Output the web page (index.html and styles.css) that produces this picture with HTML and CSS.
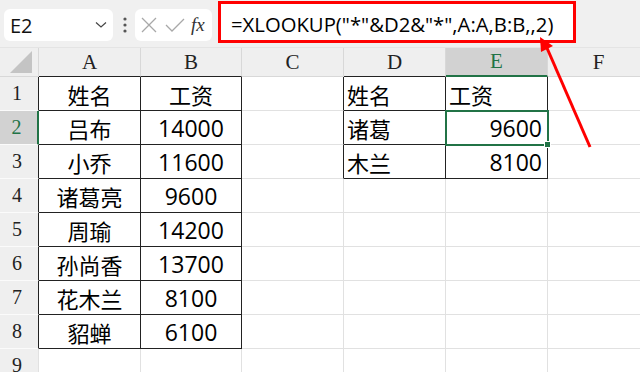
FILE: index.html
```html
<!DOCTYPE html>
<html>
<head>
    <meta charset="UTF-8">
    <title>XLOOKUP</title>
    <link rel="stylesheet" href="styles.css">
</head>
<body>
    <div class="barra">
        <div class="cuadroNombre">
            <span>E2</span>
            <svg class="flecha" width="12" height="8" viewBox="0 0 12 8"><path d="M1 1.5 L6 6 L11 1.5" fill="none" stroke="#444" stroke-width="1.2"/></svg>
        </div>
        <svg class="puntos" width="6" height="16" viewBox="0 0 6 16"><circle cx="3" cy="2" r="1.6" fill="#555"/><circle cx="3" cy="8" r="1.6" fill="#555"/><circle cx="3" cy="14" r="1.6" fill="#555"/></svg>
        <div class="cuadroFx">
            <svg width="18" height="18" viewBox="0 0 18 18"><path d="M2 2 L16 16 M16 2 L2 16" stroke="#a8a8a8" stroke-width="1.3"/></svg>
            <svg width="20" height="16" viewBox="0 0 20 16"><path d="M1 8 L7 14 L19 2" fill="none" stroke="#a8a8a8" stroke-width="1.3"/></svg>
            <span class="fx">fx</span>
        </div>
        <div class="formula">=XLOOKUP("*"&amp;D2&amp;"*",A:A,B:B,,2)</div>
    </div>

    <div class="hoja">
        <!-- cabecera de columnas -->
        <div class="cab esquina"><svg width="24" height="22" viewBox="0 0 24 22"><polygon points="0,22 22,22 22,0" fill="#c4c4c4"/></svg></div>
        <div class="cab">A</div>
        <div class="cab">B</div>
        <div class="cab">C</div>
        <div class="cab">D</div>
        <div class="cab sel">E</div>
        <div class="cab">F</div>

        <div class="fila r">1</div>
        <div class="celda c r d">姓名</div>
        <div class="celda c r d">工资</div>
        <div class="celda r"></div>
        <div class="celda l r d">姓名</div>
        <div class="celda l r d">工资</div>
        <div class="celda"></div>

        <div class="fila selFila">2</div>
        <div class="celda c r d">吕布</div>
        <div class="celda c r d num">14000</div>
        <div class="celda r"></div>
        <div class="celda l r d">诸葛</div>
        <div class="celda der r d num activa">9600</div>
        <div class="celda"></div>

        <div class="fila r">3</div>
        <div class="celda c r d">小乔</div>
        <div class="celda c r d num">11600</div>
        <div class="celda r"></div>
        <div class="celda l r d">木兰</div>
        <div class="celda der r d num">8100</div>
        <div class="celda"></div>

        <div class="fila r">4</div>
        <div class="celda c r d">诸葛亮</div>
        <div class="celda c r d num">9600</div>
        <div class="celda"></div>
        <div class="celda"></div>
        <div class="celda"></div>
        <div class="celda"></div>

        <div class="fila r">5</div>
        <div class="celda c r d">周瑜</div>
        <div class="celda c r d num">14200</div>
        <div class="celda"></div>
        <div class="celda"></div>
        <div class="celda"></div>
        <div class="celda"></div>

        <div class="fila r">6</div>
        <div class="celda c r d">孙尚香</div>
        <div class="celda c r d num">13700</div>
        <div class="celda"></div>
        <div class="celda"></div>
        <div class="celda"></div>
        <div class="celda"></div>

        <div class="fila r">7</div>
        <div class="celda c r d">花木兰</div>
        <div class="celda c r d num">8100</div>
        <div class="celda"></div>
        <div class="celda"></div>
        <div class="celda"></div>
        <div class="celda"></div>

        <div class="fila r">8</div>
        <div class="celda c r d">貂蝉</div>
        <div class="celda c r d num">6100</div>
        <div class="celda"></div>
        <div class="celda"></div>
        <div class="celda"></div>
        <div class="celda"></div>

        <div class="fila">9</div>
        <div class="celda"></div>
        <div class="celda"></div>
        <div class="celda"></div>
        <div class="celda"></div>
        <div class="celda"></div>
        <div class="celda"></div>
    </div>

    <!-- flecha roja de la anotacion -->
    <svg class="anotacion" width="640" height="372" viewBox="0 0 640 372">
        <line x1="590" y1="147" x2="547" y2="48" stroke="#ff0000" stroke-width="3"/>
        <polygon points="540,37 541,52 553,46" fill="#ff0000"/>
    </svg>
</body>
</html>
```

FILE: styles.css
```css
body{
    margin: 0;
    width: 640px;
    height: 372px;
    overflow: hidden;
    position: relative;
    background-color: #ffffff;
    font-family: "Noto Sans CJK SC", sans-serif;
}

.barra{
    height: 48px;
    background-color: #f0f0f0;
    display: flex;
    align-items: flex-start;
    box-sizing: border-box;
    border-bottom: 1px solid #e4e4e4;
}

.cuadroNombre{
    margin: 9px 0 0 4px;
    width: 109px;
    height: 32px;
    background-color: #ffffff;
    border-radius: 6px;
    display: flex;
    align-items: center;
    justify-content: space-between;
    padding: 0 6px 0 6px;
    box-sizing: border-box;
    font: 20px "Open Sans", sans-serif;
    color: #111;
}

.puntos{
    margin: 17px 0 0 9px;
}

.cuadroFx{
    margin: 9px 0 0 7px;
    width: 77px;
    height: 32px;
    background-color: #ffffff;
    border-radius: 6px;
    display: flex;
    align-items: center;
    gap: 7px;
    padding-left: 5px;
    box-sizing: border-box;
}

.cuadroFx .fx{
    font: italic 19px "Liberation Serif", serif;
    color: #333;
    margin-left: -1px;
}

.formula{
    margin: 1px 0 0 6px;
    width: 358px;
    height: 42px;
    border: 3px solid #ff0000;
    box-sizing: border-box;
    background-color: #ffffff;
    padding-left: 10px;
    font: 20.3px "Open Sans", sans-serif;
    line-height: 40px;
    color: #000;
    white-space: nowrap;
}

.hoja{
    display: grid;
    grid-template-columns: 39px 102px 101px 102px 102px 102px 102px;
    grid-template-rows: 29px repeat(9, 34px);
}

.cab, .fila, .celda{
    box-sizing: border-box;
    border-right: 1px solid #e1e1e1;
    border-bottom: 1px solid #e1e1e1;
    display: flex;
    align-items: center;
}

.cab{
    background-color: #efefef;
    border-right-color: #d8d8d8;
    border-bottom-color: #d8d8d8;
    justify-content: center;
    font: 21px "Liberation Serif", serif;
    color: #222;
}

.cab.esquina{
    justify-content: flex-end;
    align-items: flex-end;
    padding: 0 4px 3px 0;
}

.cab.sel{
    background-color: #d2d2d2;
    color: #217346;
    border-bottom: 2px solid #217346;
}

.fila{
    background-color: #efefef;
    border-bottom-color: #fbfbfb;
    justify-content: center;
    padding-right: 4px;
    font: 20px "Liberation Serif", serif;
    color: #222;
}

.fila.selFila{
    background-color: #d2d2d2;
    color: #217346;
    border-right: 2px solid #217346;
}

.celda{
    font-size: 22px;
    color: #000;
}

.celda.num{
    font-family: "Open Sans", "Noto Sans CJK SC", sans-serif;
    font-size: 23px;
}

.celda.c{
    justify-content: center;
}

.celda.l{
    padding-left: 3px;
}

.celda.der{
    justify-content: flex-end;
    padding-right: 5px;
}

.r{
    border-right-color: #222;
}

.d{
    border-bottom-color: #222;
}

.cab:nth-child(2), .cab:nth-child(3), .cab:nth-child(5){
    border-bottom-color: #222;
}

.celda.activa{
    position: relative;
    outline: 2px solid #217346;
    outline-offset: -1px;
}

.celda.activa::after{
    content: "";
    position: absolute;
    right: -4px;
    bottom: -4px;
    width: 5px;
    height: 5px;
    background-color: #217346;
    border: 1px solid #ffffff;
}

.anotacion{
    position: absolute;
    left: 0;
    top: 0;
    pointer-events: none;
}
```
